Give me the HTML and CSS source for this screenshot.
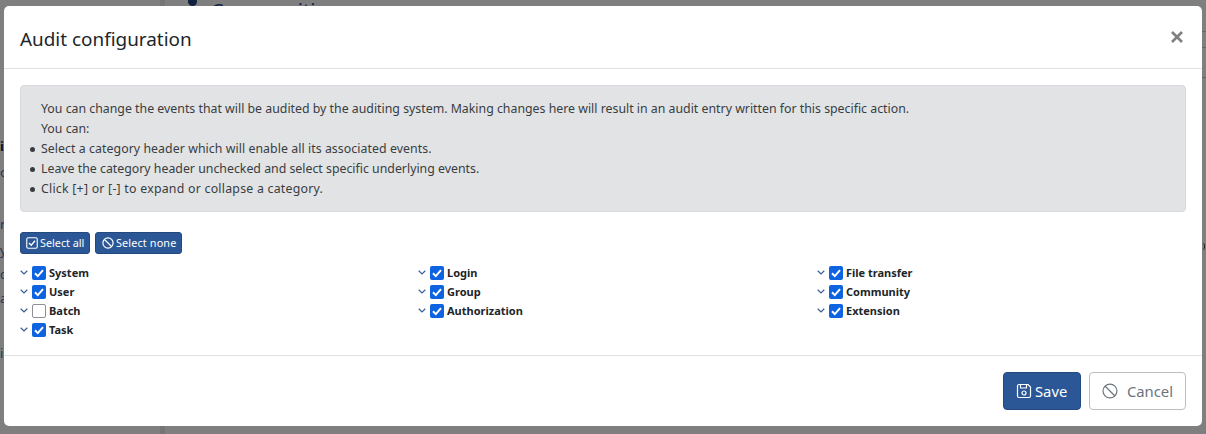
FILE: index.html
```html
<!DOCTYPE html>
<html lang="en">
<head>
<meta charset="utf-8">
<title>Audit configuration</title>
<link rel="stylesheet" href="styles.css">
</head>
<body>
<div class="backdrop-page">
  <div class="page-rule"></div>
  <span class="page-dot"></span>
  <span class="page-heading">Communities</span>
  <span class="page-frag frag-1">i</span>
  <span class="page-frag frag-2">o</span>
  <span class="page-frag frag-3">r</span>
  <span class="page-frag frag-4">y</span>
  <span class="page-frag frag-5">c</span>
  <span class="page-frag frag-6">a</span>
  <span class="page-frag frag-7">i</span>
  <span class="line line-1"></span>
  <span class="line line-2"></span>
  <span class="line line-3"></span>
  <span class="page-tick"></span>
</div>
<div class="modal" role="dialog">
  <header class="modal-header">
    <h1 class="modal-title">Audit configuration</h1>
    <button class="close" type="button" aria-label="Close">
      <svg viewBox="0 0 12 12" width="12" height="12"><path d="M1 1l10 10M11 1L1 11" fill="none" stroke="#7f7f7f" stroke-width="2.6"/></svg>
    </button>
  </header>
  <div class="modal-body">
    <div class="info">
      <div>You can change the events that will be audited by the auditing system. Making changes here will result in an audit entry written for this specific action.</div>
      <div>You can:</div>
      <ul>
        <li class="fit-a">Select a category header which will enable all its associated events.</li>
        <li>Leave the category header unchecked and select specific underlying events.</li>
        <li class="fit-b">Click [+] or [-] to expand or collapse a category.</li>
      </ul>
    </div>
    <div class="actions">
      <button class="btn-sm btn-sm-all" type="button">
        <svg viewBox="0 0 16 16" width="12" height="12"><rect x="1" y="1" width="14" height="14" rx="2" fill="none" stroke="currentColor" stroke-width="1.5"/><path d="M4 8l3 3 5-6" fill="none" stroke="currentColor" stroke-width="1.8"/></svg>
        Select all
      </button>
      <button class="btn-sm btn-sm-none" type="button">
        <svg viewBox="0 0 16 16" width="12" height="12"><circle cx="8" cy="8" r="6.8" fill="none" stroke="currentColor" stroke-width="1.6"/><path d="M3.3 3.3l9.4 9.4" stroke="currentColor" stroke-width="1.6"/></svg>
        Select none
      </button>
    </div>
    <div class="tree">
      <div class="col">
        <div class="item"><svg class="chev" viewBox="0 0 8 5"><path d="M.7.8L4 4l3.3-3.2"/></svg><span class="box on"><svg viewBox="0 0 14 14"><path d="M3 7.3l2.8 2.8L11 4.2"/></svg></span><b>System</b></div>
        <div class="item"><svg class="chev" viewBox="0 0 8 5"><path d="M.7.8L4 4l3.3-3.2"/></svg><span class="box on"><svg viewBox="0 0 14 14"><path d="M3 7.3l2.8 2.8L11 4.2"/></svg></span><b>User</b></div>
        <div class="item"><svg class="chev" viewBox="0 0 8 5"><path d="M.7.8L4 4l3.3-3.2"/></svg><span class="box"></span><b>Batch</b></div>
        <div class="item"><svg class="chev" viewBox="0 0 8 5"><path d="M.7.8L4 4l3.3-3.2"/></svg><span class="box on"><svg viewBox="0 0 14 14"><path d="M3 7.3l2.8 2.8L11 4.2"/></svg></span><b>Task</b></div>
      </div>
      <div class="col">
        <div class="item"><svg class="chev" viewBox="0 0 8 5"><path d="M.7.8L4 4l3.3-3.2"/></svg><span class="box on"><svg viewBox="0 0 14 14"><path d="M3 7.3l2.8 2.8L11 4.2"/></svg></span><b>Login</b></div>
        <div class="item"><svg class="chev" viewBox="0 0 8 5"><path d="M.7.8L4 4l3.3-3.2"/></svg><span class="box on"><svg viewBox="0 0 14 14"><path d="M3 7.3l2.8 2.8L11 4.2"/></svg></span><b>Group</b></div>
        <div class="item"><svg class="chev" viewBox="0 0 8 5"><path d="M.7.8L4 4l3.3-3.2"/></svg><span class="box on"><svg viewBox="0 0 14 14"><path d="M3 7.3l2.8 2.8L11 4.2"/></svg></span><b>Authorization</b></div>
      </div>
      <div class="col">
        <div class="item"><svg class="chev" viewBox="0 0 8 5"><path d="M.7.8L4 4l3.3-3.2"/></svg><span class="box on"><svg viewBox="0 0 14 14"><path d="M3 7.3l2.8 2.8L11 4.2"/></svg></span><b>File transfer</b></div>
        <div class="item"><svg class="chev" viewBox="0 0 8 5"><path d="M.7.8L4 4l3.3-3.2"/></svg><span class="box on"><svg viewBox="0 0 14 14"><path d="M3 7.3l2.8 2.8L11 4.2"/></svg></span><b>Community</b></div>
        <div class="item"><svg class="chev" viewBox="0 0 8 5"><path d="M.7.8L4 4l3.3-3.2"/></svg><span class="box on"><svg viewBox="0 0 14 14"><path d="M3 7.3l2.8 2.8L11 4.2"/></svg></span><b>Extension</b></div>
      </div>
    </div>
  </div>
  <footer class="modal-footer">
    <button class="btn btn-save" type="button">
      <svg viewBox="0 0 16 16" width="16" height="16"><path d="M1.5 3A1.5 1.5 0 0 1 3 1.5h9L14.500 4v9a1.500 1.500 0 0 1-1.500 1.500H3A1.500 1.500 0 0 1 1.500 13z" fill="none" stroke="currentColor" stroke-width="1.2"/><path d="M4.500 1.700v3.300h6V1.700" fill="none" stroke="currentColor" stroke-width="1.200"/><circle cx="8" cy="10" r="2" fill="none" stroke="currentColor" stroke-width="1.200"/></svg>
      Save
    </button>
    <button class="btn btn-cancel" type="button">
      <svg viewBox="0 0 16 16" width="16" height="16"><circle cx="8" cy="8" r="7" fill="none" stroke="currentColor" stroke-width="1.200"/><path d="M3 3l10 10" stroke="currentColor" stroke-width="1.200"/></svg>
      Cancel
    </button>
  </footer>
</div>
</body>
</html>
```

FILE: styles.css
```css
* { box-sizing: border-box; }
html, body { margin: 0; height: 100%; }
body {
  background: #7f7f7f;
  font-family: "Noto Sans", "Open Sans", sans-serif;
  color: #212529;
  overflow: hidden;
  position: relative;
}
.backdrop-page { position: absolute; inset: 0; color: #14233f; }
.page-rule { position: absolute; left: 160px; top: 0; bottom: 0; width: 5px; background: #757575; }
.page-dot { position: absolute; left: 188px; top: -3px; width: 9px; height: 9px; border-radius: 50%; background: #10213f; }
.page-heading { position: absolute; left: 211px; top: -3px; font-size: 20px; line-height: 27px; }
.page-frag { position: absolute; left: 0; font-size: 13px; line-height: 16px; color: #2a3550; }
.frag-1 { top: 138px; font-weight: 700; color: #111; }
.frag-2 { top: 164px; }
.frag-3 { top: 216px; color: #1f2f5f; }
.frag-4 { top: 242px; }
.frag-5 { top: 266px; }
.frag-6 { top: 290px; }
.frag-7 { top: 345px; }
.line { position: absolute; left: 1202px; right: 0; height: 1px; background: #666; }
.line-1 { top: 31px; }
.line-2 { top: 47px; }
.line-3 { top: 77px; }
.page-tick { position: absolute; left: 1202px; top: 243px; width: 3px; height: 7px; border-right: 1px solid #222; border-radius: 0 3px 3px 0; }

.modal {
  position: absolute;
  left: 4px;
  top: 6px;
  width: 1198px;
  height: 420px;
  background: #fff;
  border-radius: 5px;
  display: flex;
  flex-direction: column;
}
.modal-header {
  height: 63px;
  flex: none;
  display: flex;
  align-items: center;
  justify-content: space-between;
  padding: 5px 19px 0 16px;
  border-bottom: 1px solid #dee2e6;
}
.modal-title { margin: 0 0 1px; font-size: 18.900px; font-weight: 400; line-height: 27px; color: #212529; }
.close { border: 0; background: none; padding: 0; display: flex; margin-bottom: 5px; }
.modal-body { flex: 1; padding: 16px 16px 0; }
.info {
  height: 127px;
  background: #e2e3e5;
  border: 1px solid #d6d8db;
  border-radius: 4px;
  padding: 13px 20px;
  font-size: 12.340px;
  line-height: 20px;
  color: #383d41;
}
.info ul { margin: 0; padding: 0; list-style: none; }
.info li { position: relative; }
.info li.fit-a { letter-spacing: .056px; }
.info li.fit-b { letter-spacing: .24px; }
.info li::before {
  content: "";
  position: absolute;
  left: -11px;
  top: 8px;
  width: 5px;
  height: 5px;
  border-radius: 50%;
  background: #383d41;
}
.actions { display: flex; gap: 5px; margin-top: 20px; }
.btn-sm {
  height: 22px;
  display: flex;
  align-items: center;
  gap: 2px;
  padding: 0 0 0 5px;
  background: #2b5797;
  color: #fff;
  border: 1px solid #23497f;
  border-radius: 3px;
  font: 400 10.800px/1 "Noto Sans", sans-serif;
  white-space: nowrap;
}
.btn-sm-all { width: 70px; }
.btn-sm-none { width: 87px; padding-left: 6px; letter-spacing: .15px; }
.tree { display: grid; grid-template-columns: 398px 399px 1fr; margin-top: 9px; }
.item { display: flex; align-items: center; height: 19px; font-size: 11px; color: #212529; }
.item b { font-weight: 700; margin-left: 3px; }
.chev { width: 8px; height: 5px; margin: 0 4px 0 0; fill: none; stroke: #3a5f9a; stroke-width: 1.200; }
.box { width: 14px; height: 14px; border: 1.500px solid #8e8e9a; border-radius: 2px; background: #fff; display: flex; }
.box.on { background: #0d63e0; border: 0; }
.box svg { width: 14px; height: 14px; fill: none; stroke: #fff; stroke-width: 2; }
.modal-footer {
  height: 71px;
  flex: none;
  display: flex;
  justify-content: flex-end;
  align-items: center;
  gap: 8px;
  padding: 0 16px 0 0;
  border-top: 1px solid #dee2e6;
}
.btn {
  height: 38px;
  display: flex;
  align-items: center;
  gap: 3px;
  border-radius: 4px;
  font: 400 14.800px/1 "Noto Sans", sans-serif;
  padding: 0 12px;
}
.btn-save { width: 78px; background: #2b5797; border: 1px solid #23497f; color: #fff; }
.btn-cancel { width: 97px; background: #fff; border: 1px solid #bdbdbd; color: #6c757d; gap: 9px; }
```
